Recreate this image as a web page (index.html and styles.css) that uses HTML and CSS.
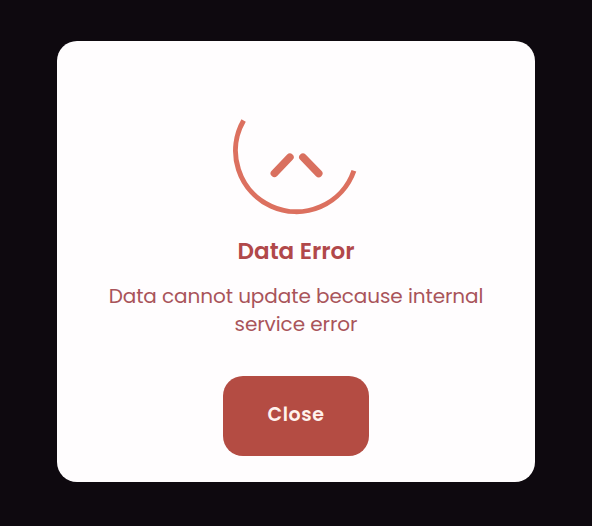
FILE: index.html
```html
<!DOCTYPE html>
<html lang="en">
<head>
<meta charset="utf-8">
<title>Data Error</title>
<link rel="stylesheet" href="styles.css">
</head>
<body>
<main class="dialog" role="alertdialog" aria-labelledby="title" aria-describedby="message">
  <svg class="icon" width="130" height="100" viewBox="0 0 130 100" fill="none" aria-hidden="true">
    <path class="arc" d="M12.6 5.5A60.86 60.86 0 1 0 122.9 55.7"/>
    <path class="mark" d="M43.4 58.3L58.9 42.2M71.9 42.2L87.7 58.5"/>
  </svg>
  <h1 class="title" id="title">Data Error</h1>
  <p class="message" id="message">Data cannot update because internal<br>service error</p>
  <button class="close" type="button">Close</button>
</main>
</body>
</html>
```

FILE: styles.css
```css
* {
  box-sizing: border-box;
}

body {
  margin: 0;
  height: 526px;
  padding: 41px 57px 44px;
  background: #0e090f;
  font-family: Poppins, Inter, "Liberation Sans", sans-serif;
}

.dialog {
  display: flex;
  flex-direction: column;
  align-items: center;
  width: 478px;
  height: 441px;
  padding-top: 74px;
  border-radius: 20px;
  background: #fffdfe;
}

.icon {
  display: block;
}

.arc {
  stroke: #dc705f;
  stroke-width: 5;
}

.mark {
  stroke: #d9705f;
  stroke-width: 7.6;
  stroke-linecap: round;
}

.title {
  margin: 20px 0 0;
  color: #b1484a;
  font-size: 23px;
  font-weight: 600;
  line-height: 32px;
}

.message {
  margin: 15px 0 0;
  color: #a9545a;
  font-size: 20px;
  letter-spacing: -0.08px;
  line-height: 28px;
  text-align: center;
  white-space: nowrap;
}

.close {
  width: 146px;
  height: 80px;
  margin-top: 38px;
  padding: 0 0 4px;
  border: 0;
  border-radius: 20px;
  background: #b44c43;
  color: #fff2ed;
  font: inherit;
  font-size: 19px;
  font-weight: 600;
  letter-spacing: 0.6px;
}
```
